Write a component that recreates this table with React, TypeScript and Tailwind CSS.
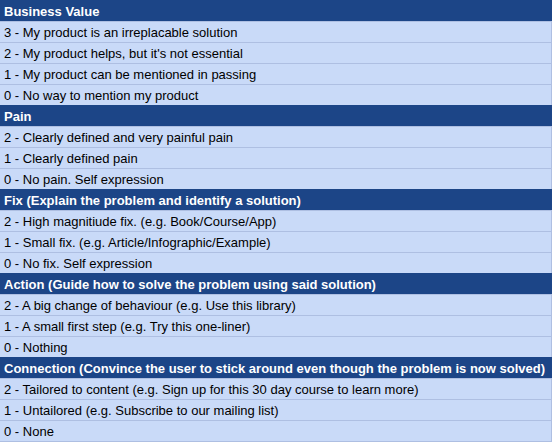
import type { FC } from "react";

interface Section {
  title: string;
  rows: string[];
}

const sections: Section[] = [
  {
    title: "Business Value",
    rows: [
      "3 - My product is an irreplacable solution",
      "2 - My product helps, but it's not essential",
      "1 - My product can be mentioned in passing",
      "0 - No way to mention my product",
    ],
  },
  {
    title: "Pain",
    rows: [
      "2 - Clearly defined and very painful pain",
      "1 - Clearly defined pain",
      "0 - No pain. Self expression",
    ],
  },
  {
    title: "Fix (Explain the problem and identify a solution)",
    rows: [
      "2 - High magnitiude fix. (e.g. Book/Course/App)",
      "1 - Small fix. (e.g. Article/Infographic/Example)",
      "0 - No fix. Self expression",
    ],
  },
  {
    title: "Action (Guide how to solve the problem using said solution)",
    rows: [
      "2 - A big change of behaviour (e.g. Use this library)",
      "1 - A small first step (e.g. Try this one-liner)",
      "0 - Nothing",
    ],
  },
  {
    title:
      "Connection (Convince the user to stick around even though the problem is now solved)",
    rows: [
      "2 - Tailored to content (e.g. Sign up for this 30 day course to learn more)",
      "1 - Untailored (e.g. Subscribe to our mailing list)",
      "0 - None",
    ],
  },
];

const App: FC = () => {
  return (
    <div className="w-[552px] font-['Liberation_Sans',Arial,sans-serif] text-[13px] leading-[18px] bg-white">
      {sections.map((section, si) => (
        <div key={si} className="flex flex-col">
          {/* Section header */}
          <div className="h-[21px] flex items-center pl-1 pt-[2px] bg-[#1c4587] text-white font-bold whitespace-nowrap">
            {section.title}
          </div>
          {section.rows.map((row, ri) => (
            <div
              key={ri}
              className={
                si === sections.length - 1 && ri === section.rows.length - 1
                  ? "h-[22px] flex items-center pl-1 pt-[2px] bg-[#c9daf8] text-black border-t border-b border-r border-[#aebfe2] whitespace-nowrap"
                  : "h-[21px] flex items-center pl-1 pt-[2px] bg-[#c9daf8] text-black border-t border-r border-[#aebfe2] whitespace-nowrap"
              }
            >
              {row}
            </div>
          ))}
        </div>
      ))}
    </div>
  );
};

export default App;
